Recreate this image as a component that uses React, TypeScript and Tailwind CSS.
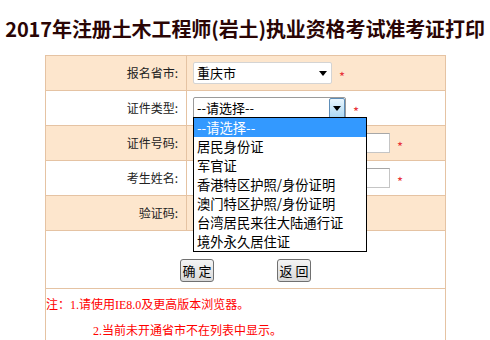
import React from "react";

const FONT = { fontFamily: '"Noto Sans CJK SC", sans-serif' };

// options shown in the open 证件类型 list
const idTypes = [
  "--请选择--",
  "居民身份证",
  "军官证",
  "香港特区护照/身份证明",
  "澳门特区护照/身份证明",
  "台湾居民来往大陆通行证",
  "境外永久居住证",
];

function Star() {
  return <span className="ml-[7px] translate-y-[3px] text-[13px] leading-none text-[#e8333a]">*</span>;
}

function Caret() {
  return (
    <svg width="8" height="5" viewBox="0 0 8 5">
      <path d="M0 0h8L4 5z" fill="#000" />
    </svg>
  );
}

function Row({ label, peach, first, children }: { label: string; peach?: boolean; first?: boolean; children?: React.ReactNode }) {
  return (
    <div
      className={`flex ${first ? "h-[34px]" : "h-[35px] border-t border-[#e5c3a3]"} ${peach ? "bg-[#fde6cd]" : "bg-white"}`}
    >
      <div className="flex w-[141px] shrink-0 items-center justify-end border-r border-[#e5c3a3] pr-[8px] text-[12px] text-[#222]">
        {label}:
      </div>
      <div className="flex flex-1 items-center pl-[6px]">{children}</div>
    </div>
  );
}

export default function App() {
  return (
    <div className="h-[340px] w-[490px] overflow-hidden bg-white" style={FONT}>
      <div className="flex h-[55px] items-center justify-center pt-[2px]">
        <h1 className="text-[20px] font-bold tracking-[-0.1px] text-[#2a0505]">
          2017年注册土木工程师(岩土)执业资格考试准考证打印
        </h1>
      </div>

      <div className="relative mx-[45px] w-[401px] border-x border-t border-[#e5c3a3]">
        <Row label="报名省市" peach first>
          <div className="flex h-[22px] w-[139px] items-center justify-between rounded-[2px] border border-[#d4d4d4] bg-white pl-[3px] pr-[4px] text-[13px] text-black">
            <span>重庆市</span>
            <Caret />
          </div>
          <Star />
        </Row>

        <Row label="证件类型">
          <div className="flex h-[23px] w-[153px] items-stretch rounded-[2px] border border-[#9a9a9a] bg-white text-[13px] text-black">
            <span className="flex flex-1 items-center pl-[3px]">--请选择--</span>
            <span className="flex w-[16px] items-center justify-center rounded-[2px] border border-[#5d8db8] bg-gradient-to-b from-[#eaf6fd] to-[#a9d7f3]">
              <Caret />
            </span>
          </div>
          <Star />
        </Row>

        <Row label="证件号码" peach>
          <div className="h-[20px] w-[197px] border border-[#c5c5c5] border-t-[#a7a7a7] bg-white" />
          <Star />
        </Row>

        <Row label="考生姓名">
          <div className="h-[20px] w-[197px] border border-[#c5c5c5] border-t-[#a7a7a7] bg-white" />
          <Star />
        </Row>

        <Row label="验证码" peach />

        <div className="flex h-[58px] justify-center gap-[63px] border-t border-[#e5c3a3] pt-[28px]">
          <button className="h-[23px] w-[34px] rounded-[3px] border border-[#707070] bg-gradient-to-b from-[#f4f4f4] to-[#d9d9d9] text-[13px] leading-none text-black">
            确 定
          </button>
          <button className="h-[23px] w-[34px] rounded-[3px] border border-[#707070] bg-gradient-to-b from-[#f4f4f4] to-[#d9d9d9] text-[13px] leading-none text-black">
            返 回
          </button>
        </div>

        <div
          className="h-[60px] border-t border-[#e5c3a3] pt-[3px] text-[12px] leading-[26px] text-[#ff0000]"
          style={{ fontFamily: '"Liberation Serif", "Noto Sans CJK SC", serif' }}
        >
          <div>注：1.请使用IE8.0及更高版本浏览器。</div>
          <div className="pl-[47px]">2.当前未开通省市不在列表中显示。</div>
        </div>

        {/* open dropdown list of 证件类型 */}
        <ul className="absolute left-[147px] top-[61px] w-[174px] border border-black bg-white text-[13.3px] text-black">
          {idTypes.map((t, i) => (
            <li
              key={t}
              className={`flex h-[19px] items-center pl-[3px] ${i === 0 ? "bg-[#3399ff] text-white" : ""}`}
            >
              {t}
            </li>
          ))}
        </ul>
      </div>
    </div>
  );
}
